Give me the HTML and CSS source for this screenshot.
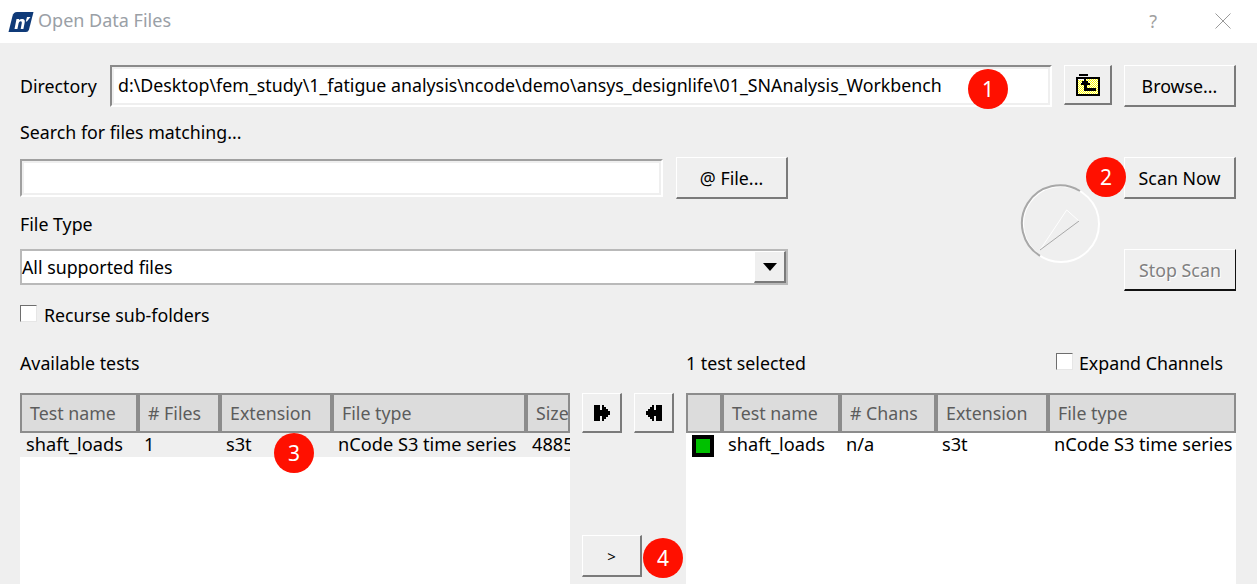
FILE: index.html
```html
<!DOCTYPE html>
<html lang="en">
<head>
<meta charset="utf-8">
<title>Open Data Files</title>
<link rel="stylesheet" href="styles.css">
</head>
<body>
<div class="dialog">
  <header class="titlebar">
    <svg class="logo" width="26" height="22" viewBox="0 0 26 22">
      <path d="M9 1H25.500L21 18.500Q20.300 21 18 21H.5L4.500 5Q5.500 1 9 1Z" fill="#0f3a78"/>
      <path d="M6.500 18L8.500 8H11.200L11 9.200Q12.500 7.700 14.500 8Q17.300 8.400 16.700 11.500L15.400 18H12.700L13.800 12Q14.100 10.300 12.800 10.300Q11 10.300 10.600 12.300L9.400 18Z" fill="#fff"/>
      <path d="M17.800 10.500L19 6H22.500L18.900 10.500Z" fill="#fff"/>
    </svg>
    <span class="title-text">Open Data Files</span>
    <span class="title-help">?</span>
    <svg class="title-close" width="16" height="16" viewBox="0 0 16 16"><path d="M.5.5L15.500 15.500M15.500.5L.5 15.500" stroke="#9a9a9a" stroke-width="1" fill="none"/></svg>
  </header>

  <main class="content">
    <div class="dir-row">
      <label class="dir-label">Directory</label>
      <div class="field dir-field">d:\Desktop\fem_study\1_fatigue analysis\ncode\demo\ansys_designlife\01_SNAnalysis_Workbench</div>
      <button class="btn btn-folder">
        <span class="folder-icon">
          <svg class="folder-lines" width="24" height="22" viewBox="0 0 24 22" shape-rendering="crispEdges">
            <rect x="3" y="0" width="9" height="2" fill="#000"/>
            <path fill-rule="evenodd" d="M0 3H24V22H0ZM2 5V20H22V5Z" fill="#000"/>
            <rect x="2" y="5" width="9" height="1" fill="#fff"/>
            <path d="M8 5H10V7H12V9H14V11H11V14H20V17H8V11H5V9H6V7H8Z" fill="#000"/>
          </svg>
        </span>
      </button>
      <button class="btn btn-wide">Browse...</button>
    </div>

    <div class="caption">Search for files matching...</div>

    <div class="form-row">
      <div class="form-left">
        <div class="search-row">
          <div class="field search-field"></div>
          <button class="btn btn-wide">@ File...</button>
        </div>
        <div class="caption">File Type</div>
        <div class="combo">
          <span class="combo-text">All supported files</span>
          <span class="combo-arrow"><i class="tri"></i></span>
        </div>
        <div class="check-row">
          <span class="check"></span>
          <span>Recurse sub-folders</span>
        </div>
      </div>
      <svg class="gauge" width="82" height="82" viewBox="1020 183 82 82" fill="none">
        <circle cx="1061" cy="224" r="38" stroke="#fff" stroke-width="2"/>
        <path d="M1080 191A38 38 0 0 0 1040 255.800" stroke="#a8a8a8" stroke-width="2"/>
        <path d="M1040 250L1066.700 210L1079 221" stroke="#fff"/>
        <path d="M1079 221L1040 250" stroke="#a8a8a8"/>
      </svg>
      <div class="form-right">
        <button class="btn btn-wide">Scan Now</button>
        <button class="btn btn-wide btn-disabled">Stop Scan</button>
      </div>
    </div>

    <div class="tests">
      <section class="panel">
        <div class="panel-head"><span>Available tests</span></div>
        <div class="table">
          <div class="thead">
            <div class="th c-name">Test name</div>
            <div class="th c-files">#&nbsp;Files</div>
            <div class="th c-ext">Extension</div>
            <div class="th c-type">File type</div>
            <div class="th c-size">Size</div>
          </div>
          <div class="tbody">
            <div class="tr tr-current">
              <div class="td c-name">shaft_loads</div>
              <div class="td c-files">1</div>
              <div class="td c-ext">s3t</div>
              <div class="td c-type">nCode S3 time series</div>
              <div class="td c-size">4885</div>
            </div>
          </div>
        </div>
      </section>

      <section class="mid">
        <div class="mid-top">
          <button class="btn btn-move">
            <svg width="16" height="16" viewBox="0 0 16 16" shape-rendering="crispEdges"><path d="M0 0H6V5H8V0H10V2H12V4H14V6H16V10H14V12H12V14H10V16H8V11H6V16H0Z" fill="#000"/></svg>
          </button>
          <button class="btn btn-move">
            <svg width="16" height="16" viewBox="0 0 16 16" shape-rendering="crispEdges"><path d="M16 0H10V5H8V0H6V2H4V4H2V6H0V10H2V12H4V14H6V16H8V11H10V16H16Z" fill="#000"/></svg>
          </button>
        </div>
        <button class="btn btn-add">&gt;</button>
      </section>

      <section class="panel">
        <div class="panel-head panel-head-right">
          <span>1 test selected</span>
          <div class="check-row check-row-inline"><span class="check check-tight"></span><span>Expand Channels</span></div>
        </div>
        <div class="table">
          <div class="thead">
            <div class="th c-flag"></div>
            <div class="th c-name">Test name</div>
            <div class="th c-chans">#&nbsp;Chans</div>
            <div class="th c-ext">Extension</div>
            <div class="th c-type c-rest">File type</div>
          </div>
          <div class="tbody">
            <div class="tr">
              <div class="td c-flag"><span class="swatch"></span></div>
              <div class="td c-name">shaft_loads</div>
              <div class="td c-chans">n/a</div>
              <div class="td c-ext">s3t</div>
              <div class="td c-type c-rest">nCode S3 time series</div>
            </div>
          </div>
        </div>
      </section>
    </div>
  </main>

  <span class="badge badge-1">1</span>
  <span class="badge badge-2">2</span>
  <span class="badge badge-3">3</span>
  <span class="badge badge-4">4</span>
</div>
</body>
</html>
```

FILE: styles.css
```css
* { box-sizing: border-box; }
html, body { margin: 0; padding: 0; }
body { width: 1257px; height: 584px; overflow: hidden; background: #efefef; }
.dialog {
  position: relative;
  width: 1257px;
  height: 584px;
  overflow: hidden;
  background: #efefef;
  color: #000;
  font-family: "Noto Sans", "Open Sans", sans-serif;
  font-size: 17.8px;
  line-height: 24px;
}
.titlebar {
  height: 43px;
  background: #fff;
  display: flex;
  align-items: center;
  padding: 0 26px 2px 8px;
}
.logo { flex: none; margin-top: 2px; }
.title-text { margin: 0 0 1px 4px; color: #9aa0a6; font-size: 18px; }
.title-help { margin-left: auto; color: #a0a0a0; font-size: 18px; }
.title-close { margin-left: 58px; }

.content { padding: 22px 21px 0 20px; }

.dir-row { display: flex; align-items: flex-start; height: 42px; }
.dir-label { width: 90px; line-height: 42px; }
.field {
  background: #fff;
  border: 2px solid;
  border-color: #8a8a8a #fff #fff #8a8a8a;
  box-shadow: inset 0 0 0 2px #efefef;
}
.dir-field {
  width: 942px;
  height: 42px;
  padding: 6px;
  white-space: nowrap;
  overflow: hidden;
}
.btn {
  display: flex;
  align-items: center;
  justify-content: center;
  padding: 0;
  background: #efefef;
  border: 1px solid #fff;
  border-right: 2px solid #7a7a7a;
  border-bottom: 2px solid #7a7a7a;
  font: inherit;
  color: #000;
}
.btn-folder { width: 48px; height: 40px; margin: 0 12px; }
.folder-icon {
  position: relative;
  display: block;
  width: 24px;
  height: 22px;
  padding: 5px 2px 2px;
  background: repeating-conic-gradient(#ffff00 0 25%, #fff 0 50%) 0 0 / 2px 2px content-box;
}
.folder-lines { position: absolute; left: 0; top: 0; }
.btn-wide { width: 112px; height: 42px; }
.btn-disabled {
  color: #808080;
  text-shadow: 1px 1px 0 #fff;
  border-right-color: #111;
  border-bottom-color: #111;
  border-right-width: 1px;
}

.caption { height: 24px; margin: 13px 0; }

.form-row { display: flex; align-items: flex-start; }
.form-left { width: 768px; }
.search-row { display: flex; align-items: center; justify-content: space-between; height: 42px; }
.search-field { width: 643px; height: 38px; border-color: #a0a0a0 #fff #fff #a0a0a0; }
.combo {
  height: 36px;
  display: flex;
  align-items: center;
  background: #fff;
  border: 2px solid #b9b9b9;
}
.combo-text { flex: 1; white-space: nowrap; }
.combo-arrow {
  width: 32px;
  height: 32px;
  display: flex;
  align-items: center;
  justify-content: center;
  background: #efefef;
  border: 1px solid #fff;
  border-right: 2px solid #7a7a7a;
  border-bottom: 2px solid #7a7a7a;
}
.tri {
  display: block;
  width: 0;
  height: 0;
  border-left: 7px solid transparent;
  border-right: 7px solid transparent;
  border-top: 8px solid #000;
}
.check-row { display: flex; align-items: center; height: 24px; margin-top: 18px; }
.check-row-inline { margin: 0; }
.check {
  width: 17px;
  height: 17px;
  margin: 0 7px 3px 0;
  background: #fff;
  border: 1px solid;
  border-color: #6e6e6e #e6e6e6 #e6e6e6 #6e6e6e;
}
.check-tight { margin-right: 6px; }
.gauge { flex: none; margin: 26px 22px 0 auto; }
.form-right { display: flex; flex-direction: column; gap: 50px; flex: none; }

.tests { display: flex; gap: 12px; margin-top: 24px; }
.panel { width: 550px; flex: none; }
.panel-head { height: 24px; margin-bottom: 18px; display: flex; align-items: center; }
.panel-head-right { justify-content: space-between; padding-right: 13px; }
.table { width: 550px; overflow: hidden; }
.thead { display: flex; height: 40px; background: #8c8c8c; }
.th {
  flex: none;
  height: 40px;
  padding-left: 8px;
  line-height: 37px;
  color: #5c5c5c;
  background: #dcdcdc;
  border: 2px solid #8c8c8c;
  white-space: nowrap;
  overflow: hidden;
}
.tbody { height: 151px; background: #fff; }
.tr { display: flex; height: 24px; line-height: 23px; font-size: 18.2px; }
.tr-current { background: #efefef; }
.td { flex: none; padding-left: 6px; white-space: nowrap; overflow: hidden; }
.c-name { width: 118px; }
.c-files { width: 82px; }
.c-chans { width: 96px; }
.c-ext { width: 112px; }
.c-type { width: 194px; }
.c-size { width: 44px; }
.c-rest { width: 188px; }
.c-flag { width: 36px; }
.td.c-flag { padding: 2px 0 0 6px; }
.swatch {
  display: block;
  width: 22px;
  height: 22px;
  background: #00c000;
  border: 4px solid #000;
}

.mid { width: 92px; flex: none; padding-top: 42px; }
.mid-top { display: flex; gap: 12px; }
.btn-move { width: 40px; height: 40px; }
.btn-add { width: 60px; height: 42px; margin-top: 102px; font-size: 15px; }

.badge {
  position: absolute;
  width: 40px;
  height: 40px;
  border-radius: 50%;
  background: #ff1000;
  color: #fff;
  font-size: 21px;
  line-height: 40px;
  text-align: center;
}
.badge-1 { left: 968px; top: 69px; }
.badge-2 { left: 1086px; top: 157px; }
.badge-3 { left: 274px; top: 433px; }
.badge-4 { left: 643px; top: 538px; }
```
